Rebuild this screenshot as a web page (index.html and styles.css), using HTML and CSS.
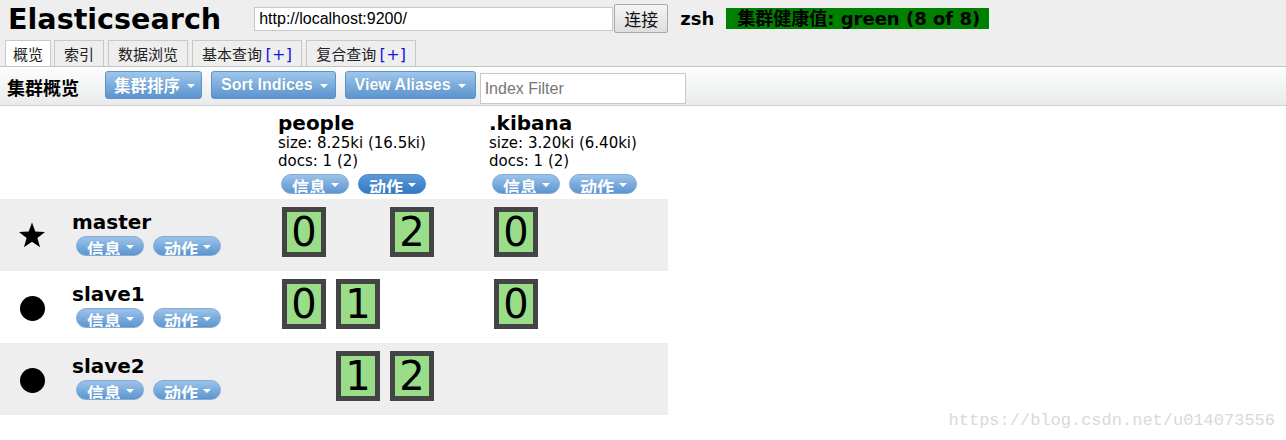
FILE: index.html
```html
<!DOCTYPE html>
<html>
<head>
<meta charset="utf-8">
<link rel="stylesheet" href="styles.css">
</head>
<body>
<div class="top">
  <h1 class="title">Elasticsearch</h1>
  <input class="url" type="text" value="http://localhost:9200/">
  <button class="connect">连接</button>
  <span class="cluster-name">zsh</span>
  <span class="health">集群健康值: green (8 of 8)</span>
</div>
<div class="tabs">
  <div class="tab active">概览</div>
  <div class="tab">索引</div>
  <div class="tab">数据浏览</div>
  <div class="tab">基本查询 <span class="plus">[+]</span></div>
  <div class="tab">复合查询 <span class="plus">[+]</span></div>
</div>
<div class="toolbar">
  <span class="tb-label">集群概览</span>
  <button class="btn cjk">集群排序<i class="caret"></i></button>
  <button class="btn">Sort Indices<i class="caret"></i></button>
  <button class="btn">View Aliases<i class="caret"></i></button>
  <input class="filter" type="text" placeholder="Index Filter">
</div>
<div class="cluster">
  <div class="row head">
    <div class="c-icon"></div>
    <div class="c-name"></div>
    <div class="c-idx wide">
      <div class="idx-title">people</div>
      <div class="idx-meta">size: 8.25ki (16.5ki)</div>
      <div class="idx-meta">docs: 1 (2)</div>
      <div class="pills"><span class="pill">信息<i class="caret"></i></span><span class="pill dark">动作<i class="caret"></i></span></div>
    </div>
    <div class="c-idx">
      <div class="idx-title">.kibana</div>
      <div class="idx-meta">size: 3.20ki (6.40ki)</div>
      <div class="idx-meta">docs: 1 (2)</div>
      <div class="pills"><span class="pill">信息<i class="caret"></i></span><span class="pill">动作<i class="caret"></i></span></div>
    </div>
  </div>

  <div class="row node odd">
    <div class="c-icon"><svg width="28" height="26" viewBox="0 0 28 26"><polygon points="14,0.5 17.3,9.6 27,9.9 19.4,15.9 22.1,25.3 14,19.8 5.9,25.3 8.6,15.9 1,9.9 10.7,9.6" fill="#000"/></svg></div>
    <div class="c-name">
      <div class="node-name">master</div>
      <div class="pills"><span class="pill">信息<i class="caret"></i></span><span class="pill">动作<i class="caret"></i></span></div>
    </div>
    <div class="c-idx wide shards"><span class="shard">0</span><span class="slot"></span><span class="shard">2</span></div>
    <div class="c-idx shards"><span class="shard">0</span></div>
  </div>

  <div class="row node">
    <div class="c-icon"><span class="dot"></span></div>
    <div class="c-name">
      <div class="node-name">slave1</div>
      <div class="pills"><span class="pill">信息<i class="caret"></i></span><span class="pill">动作<i class="caret"></i></span></div>
    </div>
    <div class="c-idx wide shards"><span class="shard">0</span><span class="shard">1</span></div>
    <div class="c-idx shards"><span class="shard">0</span></div>
  </div>

  <div class="row node odd">
    <div class="c-icon"><span class="dot"></span></div>
    <div class="c-name">
      <div class="node-name">slave2</div>
      <div class="pills"><span class="pill">信息<i class="caret"></i></span><span class="pill">动作<i class="caret"></i></span></div>
    </div>
    <div class="c-idx wide shards"><span class="slot"></span><span class="shard">1</span><span class="shard">2</span></div>
    <div class="c-idx shards"></div>
  </div>
</div>
<div class="watermark">https://blog.csdn.net/u014073556</div>
</body>
</html>
```
FILE: styles.css
```css
html, body {
  margin: 0;
  padding: 0;
  background: #fff;
}
body {
  font-family: "DejaVu Sans", "Noto Sans CJK SC", sans-serif;
  color: #000;
  position: relative;
  height: 440px;
  overflow: hidden;
}
.top {
  display: flex;
  align-items: center;
  height: 37px;
  padding-left: 8px;
  background: #eeeeee;
}
.title {
  margin: 0 33px 0 0;
  font-size: 28.6px;
  font-weight: bold;
  font-family: "DejaVu Sans", sans-serif;
}
.url {
  width: 359px;
  height: 24px;
  box-sizing: border-box;
  border: 1px solid #c8c8c8;
  padding: 0 4px;
  font-family: "Liberation Sans", sans-serif;
  font-size: 16px;
  margin: 0;
  background: #fff;
  outline: none;
}
.connect {
  width: 54px;
  height: 29px;
  margin: 0 0 0 1px;
  border: 1px solid #a8a8a8;
  border-radius: 2px;
  background: linear-gradient(#f5f5f5, #dedede);
  font-family: "Noto Sans CJK SC", sans-serif;
  font-size: 17px;
  color: #111;
  padding: 0;
  line-height: 26px;
}
.cluster-name {
  margin-left: 12px;
  font-weight: bold;
  font-size: 18px;
}
.health {
  margin-left: 12px;
  width: 263px;
  height: 21px;
  box-sizing: border-box;
  background: #008000;
  font-weight: bold;
  font-size: 18px;
  line-height: 21px;
  padding-left: 11px;
  font-family: "DejaVu Sans", "Noto Sans CJK SC", sans-serif;
  white-space: nowrap;
  overflow: hidden;
}
.tabs {
  display: flex;
  align-items: flex-end;
  height: 29px;
  padding-left: 5px;
  background: #eeeeee;
}
.tab {
  height: 25px;
  border: 1px solid #c8c8c8;
  border-bottom: none;
  padding: 0 9px;
  margin-right: 4px;
  font-family: "Noto Sans CJK SC", sans-serif;
  font-size: 15px;
  line-height: 25px;
  color: #222;
  background: #eeeeee;
}
.tab.active {
  background: #fff;
  padding: 0 7px;
  margin-right: 3px;
}
.plus {
  color: #1515e0;
  font-family: "DejaVu Sans", sans-serif;
  font-size: 16px;
  letter-spacing: 0.3px;
}
.toolbar {
  height: 38px;
  display: flex;
  align-items: flex-start;
  border-top: 1px solid #c4c4c4;
  border-bottom: 1px solid #d0d0d0;
  background: linear-gradient(#fdfdfd, #e9eaeb);
  padding-left: 7px;
}
.tb-label {
  font-family: "Noto Sans CJK SC", sans-serif;
  font-weight: bold;
  font-size: 18px;
  line-height: 40px;
  margin-right: 26px;
}
.btn {
  margin-top: 4px;
  height: 28px;
  border: 1px solid #5f93c8;
  border-radius: 3px;
  background: linear-gradient(#9ec6ec, #5b94cd);
  color: #fff;
  font-family: "Liberation Sans", "Noto Sans CJK SC", sans-serif;
  font-weight: bold;
  font-size: 16px;
  padding: 0 7px 0 9px;
  margin-right: 9px;
  display: flex;
  align-items: center;
  text-shadow: 0 0 1px rgba(40,80,130,0.4);
}
.btn.cjk {
  font-family: "Noto Sans CJK SC", sans-serif;
  font-size: 16.5px;
  padding: 0 6px 0 8px;
}
.btn:nth-of-type(3) { margin-right: 4px; padding-right: 9px; }
.caret {
  display: inline-block;
  width: 0;
  height: 0;
  border-left: 4px solid transparent;
  border-right: 4px solid transparent;
  border-top: 4px solid #fff;
  margin-left: 7px;
  margin-top: 2px;
}
.filter {
  margin-top: 6px;
  width: 206px;
  height: 31px;
  box-sizing: border-box;
  border: 1px solid #c8c8c8;
  padding: 0 4px;
  font-family: "Liberation Sans", sans-serif;
  font-size: 16px;
  background: #fff;
  outline: none;
}
.filter::placeholder { color: #777; }

.cluster {
  width: 668px;
}
.row {
  display: grid;
  grid-template-columns: 72px 206px 211px 179px;
}
.row.head { height: 93px; }
.row.node { height: 72px; }
.row.odd { background: #eeeeee; }
.c-icon {
  display: flex;
  align-items: center;
  justify-content: center;
  padding-right: 8px;
}
.dot {
  width: 25px;
  height: 25px;
  border-radius: 50%;
  background: #000;
  margin-top: 2px;
}
.idx-title {
  font-weight: bold;
  font-size: 20px;
  line-height: 22px;
  margin-top: 6px;
}
.idx-meta {
  font-size: 15px;
  line-height: 18px;
}
.pills {
  display: flex;
  gap: 9px;
  margin-left: 3px;
  margin-top: 4px;
}
.c-name .pills { margin-left: 4px; margin-top: 3px; }
.pill {
  width: 68px;
  height: 20px;
  box-sizing: border-box;
  border: 1px solid #86acd6;
  border-radius: 10px;
  background: linear-gradient(#9cc3ea, #5c95cf);
  color: #fff;
  font-family: "Noto Sans CJK SC", sans-serif;
  font-weight: bold;
  font-size: 17px;
  line-height: 23px;
  padding-left: 10px;
  display: flex;
  align-items: flex-start;
  overflow: hidden;
  white-space: nowrap;
}
.pill.dark { background: linear-gradient(#5d9ad8, #3079c4); border-color: #4d87c4; }
.pill .caret { margin-top: 8px; margin-left: 5px; }
.node-name {
  font-weight: bold;
  font-size: 20px;
  line-height: 22px;
  margin-top: 12px;
}
.shards {
  display: flex;
  gap: 10px;
  padding-left: 4px;
  padding-top: 8px;
}
.c-idx:not(.wide).shards { padding-left: 5px; }
.shard, .slot {
  width: 44px;
  height: 50px;
  box-sizing: border-box;
}
.shard {
  border: 5px solid #444;
  background: #99dd88;
  font-size: 40px;
  line-height: 40px;
  text-align: center;
  font-family: "DejaVu Sans", sans-serif;
}
.watermark {
  position: absolute;
  right: 11px;
  bottom: 10px;
  font-family: "Liberation Mono", monospace;
  font-size: 17px;
  color: #d9d9d9;
}
```
